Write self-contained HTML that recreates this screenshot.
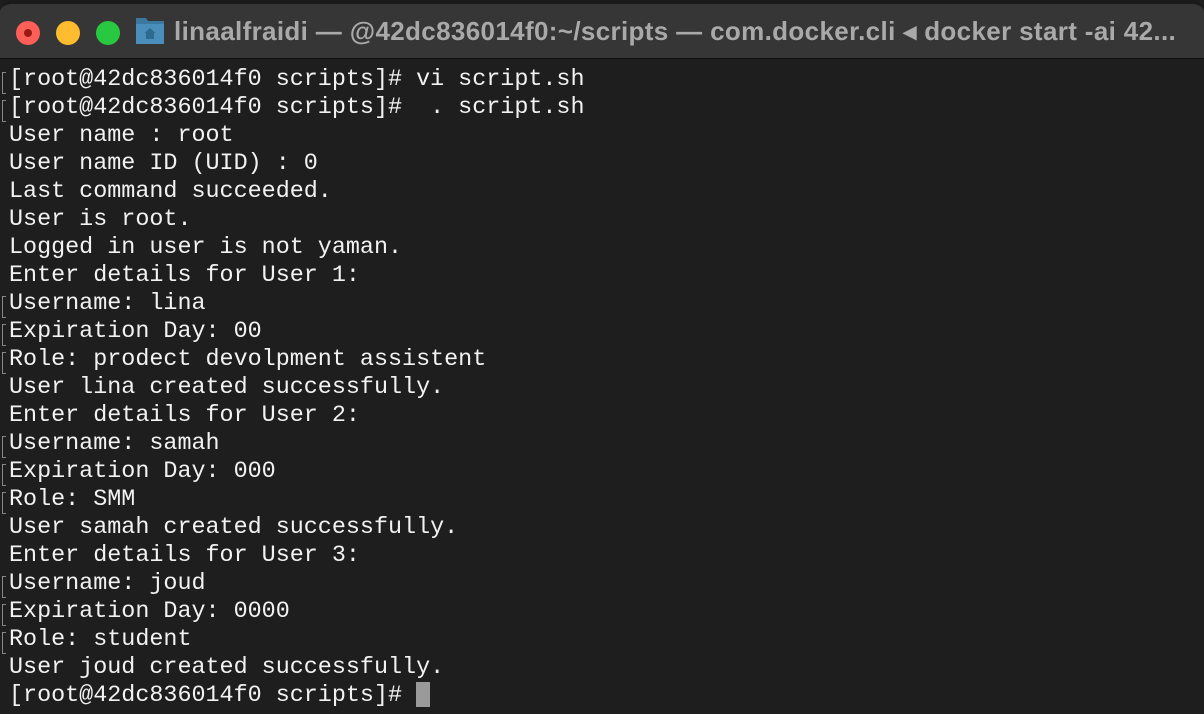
<!DOCTYPE html>
<html><head><meta charset="utf-8"><style>
html,body{margin:0;padding:0;width:1204px;height:714px;overflow:hidden;background:#1e1e1e}
.win{position:absolute;left:0;top:0;width:1204px;height:714px;background:#1e1e1e;border-radius:12px 12px 0 0;overflow:hidden}
.bar{position:absolute;left:0;top:0;width:1204px;height:59px;background:#363636;border-bottom:1px solid #111;border-top:4px solid #1a1a1a;box-sizing:border-box;border-radius:12px 12px 0 0}
.dot{position:absolute;top:17px;width:24px;height:24px;border-radius:50%}
.title{position:absolute;left:174px;top:12px;font:bold 26px "Liberation Sans",sans-serif;color:#a9a9a9;white-space:nowrap;letter-spacing:0.35px}
pre{position:absolute;left:9px;top:66px;margin:0;font:23.4px/28px "Liberation Mono",monospace;color:#f2f2f2}
.m{position:absolute;left:2px;width:3px;height:20px;border-left:1px solid #888;border-top:1px solid #888;border-bottom:1px solid #888}
.cur{position:absolute;left:416px;top:682px;width:14px;height:25px;background:#9a9a9a}
</style></head><body><div class="win">
<div class="bar">
<div class="dot" style="left:16px;background:#fe5f57"><div style="position:absolute;left:8px;top:8px;width:8px;height:8px;border-radius:50%;background:#9a1a12"></div></div>
<div class="dot" style="left:56px;background:#febc2e"></div>
<div class="dot" style="left:96px;background:#28c840"></div>
<svg style="position:absolute;left:135px;top:12px" width="30" height="30" viewBox="0 0 30 30"><path d="M1 2h10l2 3h16v23H1z" fill="#3a78a0"/><path d="M1 8h28v20H1z" fill="#4a8fbb"/><path d="M15 12l-5.5 5h1.5V23h8v-6h1.5z" fill="#2d6a90"/></svg>
<div class="title">linaalfraidi — @42dc836014f0:~/scripts — com.docker.cli ◂ docker start -ai 42...</div>
</div>
<div class="m" style="top:72px"></div><div class="m" style="top:100px"></div>
<div class="m" style="top:296px"></div><div class="m" style="top:324px"></div><div class="m" style="top:352px"></div>
<div class="m" style="top:436px"></div><div class="m" style="top:464px"></div><div class="m" style="top:492px"></div>
<div class="m" style="top:576px"></div><div class="m" style="top:604px"></div><div class="m" style="top:632px"></div>
<pre>[root@42dc836014f0 scripts]# vi script.sh
[root@42dc836014f0 scripts]#  . script.sh
User name : root
User name ID (UID) : 0
Last command succeeded.
User is root.
Logged in user is not yaman.
Enter details for User 1:
Username: lina
Expiration Day: 00
Role: prodect devolpment assistent
User lina created successfully.
Enter details for User 2:
Username: samah
Expiration Day: 000
Role: SMM
User samah created successfully.
Enter details for User 3:
Username: joud
Expiration Day: 0000
Role: student
User joud created successfully.
[root@42dc836014f0 scripts]# </pre>
<div class="cur"></div>
</div></body></html>
